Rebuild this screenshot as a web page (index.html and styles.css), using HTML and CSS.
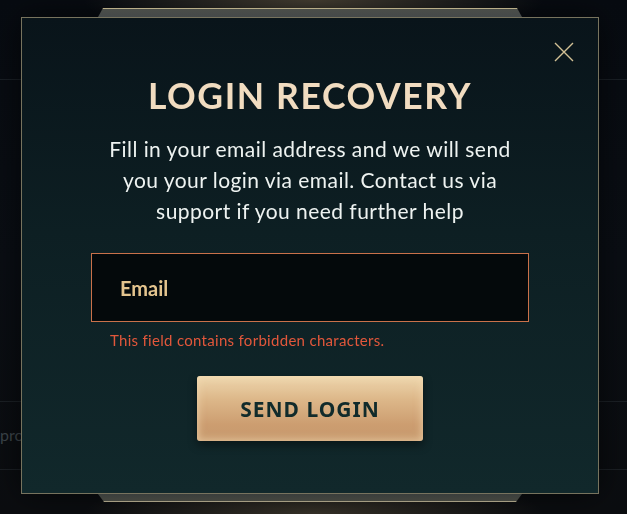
FILE: index.html
```html
<!DOCTYPE html>
<html lang="en">
<head>
<meta charset="utf-8">
<title>Login Recovery</title>
<link rel="stylesheet" href="styles.css">
</head>
<body>
<div class="backdrop">
  <span class="behind-text">process</span>
</div>
<div class="overlay">
  <div class="modal">
    <div class="tab tab-top"></div>
    <div class="tab tab-bottom"></div>
    <button class="close" aria-label="Close">
      <svg width="20" height="20" viewBox="0 0 20 20"><path d="M1 1L19 19M19 1L1 19" stroke="#d2c196" stroke-width="1.4" fill="none"/></svg>
    </button>
    <div class="content">
      <h1 class="title">LOGIN RECOVERY</h1>
      <p class="desc">Fill in your email address and we will send you your login via email. Contact us via support if you need further help</p>
      <div class="field">
        <input class="email" type="text" placeholder="Email">
        <div class="error">This field contains forbidden characters.</div>
      </div>
      <button class="send">SEND LOGIN</button>
    </div>
  </div>
</div>
</body>
</html>
```
FILE: styles.css
```css
html, body {
  margin: 0;
  height: 100%;
}
body {
  background:
    radial-gradient(ellipse 230px 40px at 50% 0%, rgba(110, 96, 72, 0.6), rgba(0,0,0,0) 100%),
    radial-gradient(ellipse 230px 40px at 50% 100%, rgba(100, 88, 66, 0.5), rgba(0,0,0,0) 100%),
    linear-gradient(180deg, #070b11 0%, #0a0e14 50%, #0b0d10 100%);
  font-family: "Lato", "Liberation Sans", sans-serif;
  overflow: hidden;
}
.backdrop {
  height: 514px;
  background:
    linear-gradient(180deg, transparent 79px, rgba(60,68,74,0.35) 79px, rgba(60,68,74,0.35) 80px, transparent 80px),
    linear-gradient(180deg, transparent 401px, rgba(60,68,74,0.35) 401px, rgba(60,68,74,0.35) 402px, transparent 402px),
    linear-gradient(180deg, transparent 469px, rgba(60,68,74,0.35) 469px, rgba(60,68,74,0.35) 470px, transparent 470px);
  display: flex;
  align-items: flex-start;
  padding-top: 425px;
  box-sizing: border-box;
}
.behind-text {
  color: #3d454b;
  font-size: 16px;
}
.overlay {
  position: fixed;
  inset: 0;
  display: flex;
  align-items: flex-start;
  padding: 17px 0 0 21px;
}
.modal {
  position: relative;
  width: 578px;
  height: 477px;
  box-sizing: border-box;
  border: 1px solid #77735e;
  background: linear-gradient(180deg, #09141a 0%, #0d1f23 45%, #11282b 100%);
  box-shadow: 0 0 30px rgba(0,0,0,0.6);
}
.tab {
  position: absolute;
  left: 76px;
  width: 424px;
}
.tab-top {
  top: -10px;
  height: 9px;
  background: linear-gradient(180deg, #b8ad88 0, #b8ad88 1px, #4b4e49 1px, #45494a 100%);
  clip-path: polygon(5px 0, calc(100% - 5px) 0, 100% 100%, 0 100%);
}
.tab-bottom {
  bottom: -9px;
  height: 8px;
  background: linear-gradient(180deg, #3a3e3c 0%, #44463f calc(100% - 1px), #a49c82 calc(100% - 1px));
  clip-path: polygon(0 0, 100% 0, calc(100% - 6px) 100%, 6px 100%);
}
.close {
  position: absolute;
  top: 23px;
  right: 23px;
  width: 22px;
  height: 22px;
  padding: 1px;
  border: 0;
  background: none;
  cursor: pointer;
}
.close svg { display: block; }
.content {
  display: flex;
  flex-direction: column;
  align-items: center;
  padding-top: 58px;
}
.title {
  margin: 0;
  font-family: "Lato", sans-serif;
  font-weight: 700;
  font-size: 35.5px;
  line-height: 40px;
  letter-spacing: 1.6px;
  color: #f1dcc0;
}
.desc {
  margin: 17px 0 0;
  width: 440px;
  text-align: center;
  font-size: 21px;
  line-height: 31px;
  letter-spacing: 0.45px;
  color: #eef3f1;
}
.field {
  margin-top: 27px;
  width: 438px;
}
.email {
  display: block;
  width: 100%;
  height: 69px;
  box-sizing: border-box;
  border: 1px solid #c9714a;
  background: #04090b;
  padding: 0 28px;
  font-family: "Lato", sans-serif;
  font-size: 20px;
  font-weight: 700;
  color: #e4c48e;
  outline: none;
}
.email::placeholder {
  color: #e4c48e;
}
.error {
  margin: 9px 0 0 19px;
  font-size: 15px;
  line-height: 18px;
  letter-spacing: 0.3px;
  color: #e2573b;
}
.send {
  margin-top: 27px;
  width: 226px;
  height: 65px;
  border: 0;
  border-radius: 3px;
  background: linear-gradient(180deg, #eed7ae 0%, #ddb88a 35%, #cc9d70 75%, #c79a6e 100%);
  box-shadow: inset 0 0 7px 2px rgba(245, 220, 180, 0.55), 0 4px 10px rgba(0,0,0,0.45);
  font-family: "Noto Sans", "Open Sans", sans-serif;
  font-weight: 700;
  font-size: 21px;
  letter-spacing: 1px;
  color: #112b2b;
  cursor: pointer;
}
```
